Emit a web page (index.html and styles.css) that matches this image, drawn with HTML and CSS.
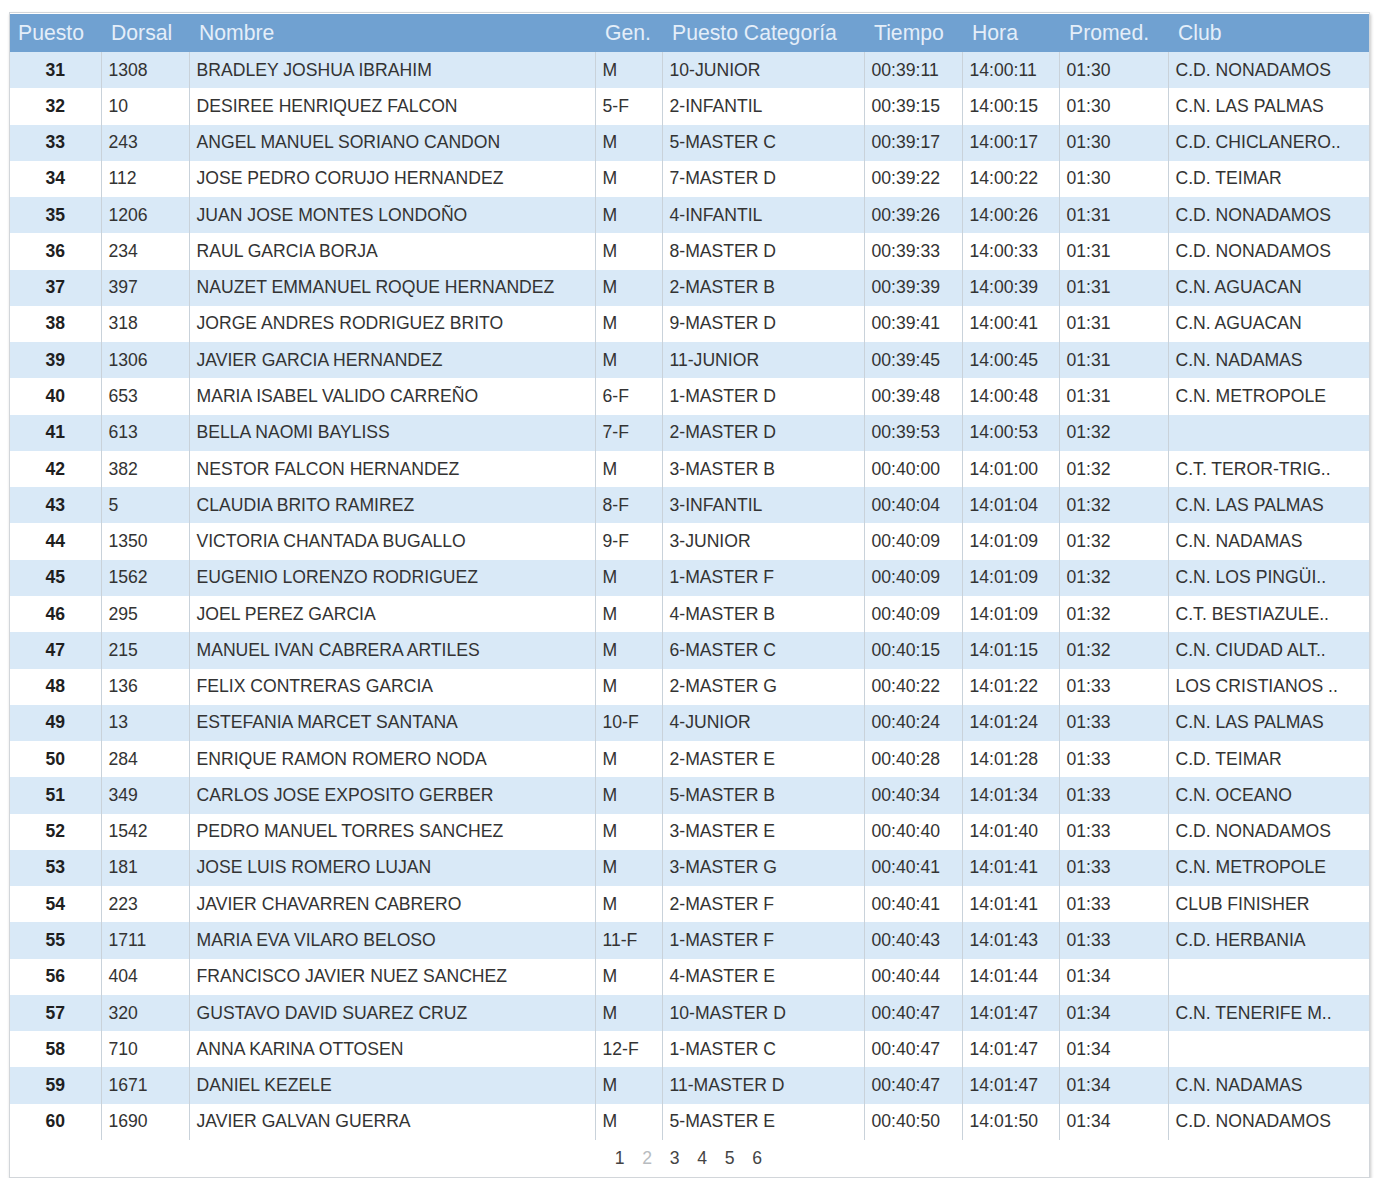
FILE: index.html
```html
<!DOCTYPE html>
<html lang="es">
<head>
<meta charset="utf-8">
<title>Clasificación</title>
<link rel="stylesheet" href="styles.css">
</head>
<body>
<div class="box">
<table class="results">
<colgroup>
<col class="c-pos"><col class="c-dor"><col class="c-nom"><col class="c-gen"><col class="c-cat"><col class="c-tie"><col class="c-hor"><col class="c-pro"><col class="c-club">
</colgroup>
<thead>
<tr><th>Puesto</th><th>Dorsal</th><th>Nombre</th><th>Gen.</th><th>Puesto Categoría</th><th>Tiempo</th><th>Hora</th><th>Promed.</th><th>Club</th></tr>
</thead>
<tbody>
<tr><td>31</td><td>1308</td><td>BRADLEY JOSHUA IBRAHIM</td><td>M</td><td>10-JUNIOR</td><td>00:39:11</td><td>14:00:11</td><td>01:30</td><td>C.D. NONADAMOS</td></tr>
<tr><td>32</td><td>10</td><td>DESIREE HENRIQUEZ FALCON</td><td>5-F</td><td>2-INFANTIL</td><td>00:39:15</td><td>14:00:15</td><td>01:30</td><td>C.N. LAS PALMAS</td></tr>
<tr><td>33</td><td>243</td><td>ANGEL MANUEL SORIANO CANDON</td><td>M</td><td>5-MASTER C</td><td>00:39:17</td><td>14:00:17</td><td>01:30</td><td>C.D. CHICLANERO..</td></tr>
<tr><td>34</td><td>112</td><td>JOSE PEDRO CORUJO HERNANDEZ</td><td>M</td><td>7-MASTER D</td><td>00:39:22</td><td>14:00:22</td><td>01:30</td><td>C.D. TEIMAR</td></tr>
<tr><td>35</td><td>1206</td><td>JUAN JOSE MONTES LONDOÑO</td><td>M</td><td>4-INFANTIL</td><td>00:39:26</td><td>14:00:26</td><td>01:31</td><td>C.D. NONADAMOS</td></tr>
<tr><td>36</td><td>234</td><td>RAUL GARCIA BORJA</td><td>M</td><td>8-MASTER D</td><td>00:39:33</td><td>14:00:33</td><td>01:31</td><td>C.D. NONADAMOS</td></tr>
<tr><td>37</td><td>397</td><td>NAUZET EMMANUEL ROQUE HERNANDEZ</td><td>M</td><td>2-MASTER B</td><td>00:39:39</td><td>14:00:39</td><td>01:31</td><td>C.N. AGUACAN</td></tr>
<tr><td>38</td><td>318</td><td>JORGE ANDRES RODRIGUEZ BRITO</td><td>M</td><td>9-MASTER D</td><td>00:39:41</td><td>14:00:41</td><td>01:31</td><td>C.N. AGUACAN</td></tr>
<tr><td>39</td><td>1306</td><td>JAVIER GARCIA HERNANDEZ</td><td>M</td><td>11-JUNIOR</td><td>00:39:45</td><td>14:00:45</td><td>01:31</td><td>C.N. NADAMAS</td></tr>
<tr><td>40</td><td>653</td><td>MARIA ISABEL VALIDO CARREÑO</td><td>6-F</td><td>1-MASTER D</td><td>00:39:48</td><td>14:00:48</td><td>01:31</td><td>C.N. METROPOLE</td></tr>
<tr><td>41</td><td>613</td><td>BELLA NAOMI BAYLISS</td><td>7-F</td><td>2-MASTER D</td><td>00:39:53</td><td>14:00:53</td><td>01:32</td><td></td></tr>
<tr><td>42</td><td>382</td><td>NESTOR FALCON HERNANDEZ</td><td>M</td><td>3-MASTER B</td><td>00:40:00</td><td>14:01:00</td><td>01:32</td><td>C.T. TEROR-TRIG..</td></tr>
<tr><td>43</td><td>5</td><td>CLAUDIA BRITO RAMIREZ</td><td>8-F</td><td>3-INFANTIL</td><td>00:40:04</td><td>14:01:04</td><td>01:32</td><td>C.N. LAS PALMAS</td></tr>
<tr><td>44</td><td>1350</td><td>VICTORIA CHANTADA BUGALLO</td><td>9-F</td><td>3-JUNIOR</td><td>00:40:09</td><td>14:01:09</td><td>01:32</td><td>C.N. NADAMAS</td></tr>
<tr><td>45</td><td>1562</td><td>EUGENIO LORENZO RODRIGUEZ</td><td>M</td><td>1-MASTER F</td><td>00:40:09</td><td>14:01:09</td><td>01:32</td><td>C.N. LOS PINGÜI..</td></tr>
<tr><td>46</td><td>295</td><td>JOEL PEREZ GARCIA</td><td>M</td><td>4-MASTER B</td><td>00:40:09</td><td>14:01:09</td><td>01:32</td><td>C.T. BESTIAZULE..</td></tr>
<tr><td>47</td><td>215</td><td>MANUEL IVAN CABRERA ARTILES</td><td>M</td><td>6-MASTER C</td><td>00:40:15</td><td>14:01:15</td><td>01:32</td><td>C.N. CIUDAD ALT..</td></tr>
<tr><td>48</td><td>136</td><td>FELIX CONTRERAS GARCIA</td><td>M</td><td>2-MASTER G</td><td>00:40:22</td><td>14:01:22</td><td>01:33</td><td>LOS CRISTIANOS ..</td></tr>
<tr><td>49</td><td>13</td><td>ESTEFANIA MARCET SANTANA</td><td>10-F</td><td>4-JUNIOR</td><td>00:40:24</td><td>14:01:24</td><td>01:33</td><td>C.N. LAS PALMAS</td></tr>
<tr><td>50</td><td>284</td><td>ENRIQUE RAMON ROMERO NODA</td><td>M</td><td>2-MASTER E</td><td>00:40:28</td><td>14:01:28</td><td>01:33</td><td>C.D. TEIMAR</td></tr>
<tr><td>51</td><td>349</td><td>CARLOS JOSE EXPOSITO GERBER</td><td>M</td><td>5-MASTER B</td><td>00:40:34</td><td>14:01:34</td><td>01:33</td><td>C.N. OCEANO</td></tr>
<tr><td>52</td><td>1542</td><td>PEDRO MANUEL TORRES SANCHEZ</td><td>M</td><td>3-MASTER E</td><td>00:40:40</td><td>14:01:40</td><td>01:33</td><td>C.D. NONADAMOS</td></tr>
<tr><td>53</td><td>181</td><td>JOSE LUIS ROMERO LUJAN</td><td>M</td><td>3-MASTER G</td><td>00:40:41</td><td>14:01:41</td><td>01:33</td><td>C.N. METROPOLE</td></tr>
<tr><td>54</td><td>223</td><td>JAVIER CHAVARREN CABRERO</td><td>M</td><td>2-MASTER F</td><td>00:40:41</td><td>14:01:41</td><td>01:33</td><td>CLUB FINISHER</td></tr>
<tr><td>55</td><td>1711</td><td>MARIA EVA VILARO BELOSO</td><td>11-F</td><td>1-MASTER F</td><td>00:40:43</td><td>14:01:43</td><td>01:33</td><td>C.D. HERBANIA</td></tr>
<tr><td>56</td><td>404</td><td>FRANCISCO JAVIER NUEZ SANCHEZ</td><td>M</td><td>4-MASTER E</td><td>00:40:44</td><td>14:01:44</td><td>01:34</td><td></td></tr>
<tr><td>57</td><td>320</td><td>GUSTAVO DAVID SUAREZ CRUZ</td><td>M</td><td>10-MASTER D</td><td>00:40:47</td><td>14:01:47</td><td>01:34</td><td>C.N. TENERIFE M..</td></tr>
<tr><td>58</td><td>710</td><td>ANNA KARINA OTTOSEN</td><td>12-F</td><td>1-MASTER C</td><td>00:40:47</td><td>14:01:47</td><td>01:34</td><td></td></tr>
<tr><td>59</td><td>1671</td><td>DANIEL KEZELE</td><td>M</td><td>11-MASTER D</td><td>00:40:47</td><td>14:01:47</td><td>01:34</td><td>C.N. NADAMAS</td></tr>
<tr><td>60</td><td>1690</td><td>JAVIER GALVAN GUERRA</td><td>M</td><td>5-MASTER E</td><td>00:40:50</td><td>14:01:50</td><td>01:34</td><td>C.D. NONADAMOS</td></tr>
</tbody>
</table>
<div class="pager">
<a class="page">1</a><span class="page current">2</span><a class="page">3</a><a class="page">4</a><a class="page">5</a><a class="page">6</a>
</div>
</div>
</body>
</html>
```

FILE: styles.css
```css
html, body {
  margin: 0;
  padding: 0;
  background: #ffffff;
}
body {
  font-family: "Liberation Sans", Arial, sans-serif;
  color: #333333;
}
.box {
  margin: 12px 0 0 9px;
  width: 1359px;
  border: 1px solid #d2d6da;
  box-shadow: 1px 2px 3px rgba(0, 0, 0, 0.22);
  background: #ffffff;
  padding-top: 1px;
}
.results {
  width: 1359px;
  border-collapse: collapse;
  table-layout: fixed;
}
.c-pos { width: 91px; }
.c-dor { width: 88px; }
.c-nom { width: 406px; }
.c-gen { width: 67px; }
.c-cat { width: 202px; }
.c-tie { width: 98px; }
.c-hor { width: 97px; }
.c-pro { width: 109px; }
.c-club { width: 201px; }

.results th {
  background: #70a1d1;
  color: #e4eef9;
  font-weight: normal;
  font-size: 21.2px;
  text-align: left;
  height: 38px;
  padding: 0 0 0 10px;
  white-space: nowrap;
  overflow: hidden;
}
.results th:first-child {
  padding-left: 8px;
}
.results td {
  height: 36.28px;
  padding: 0 0 0 7px;
  font-size: 17.6px;
  white-space: nowrap;
  overflow: hidden;
  border-left: 1px solid #c9d2da;
  color: #333333;
}
.results td:first-child {
  border-left: none;
  text-align: center;
  font-weight: bold;
  color: #1f1f1f;
  padding: 0;
}
.results tbody tr:nth-child(odd) td {
  background: #d9e9f7;
}
.results tbody tr:nth-child(even) td {
  background: #ffffff;
}
.pager {
  height: 37px;
  display: flex;
  justify-content: center;
  align-items: center;
  font-size: 17.6px;
  padding-right: 2px;
}
.page {
  color: #444444;
  width: 27.5px;
  text-align: center;
  cursor: pointer;
}
.page.current {
  color: #b8bcc0;
}
```
